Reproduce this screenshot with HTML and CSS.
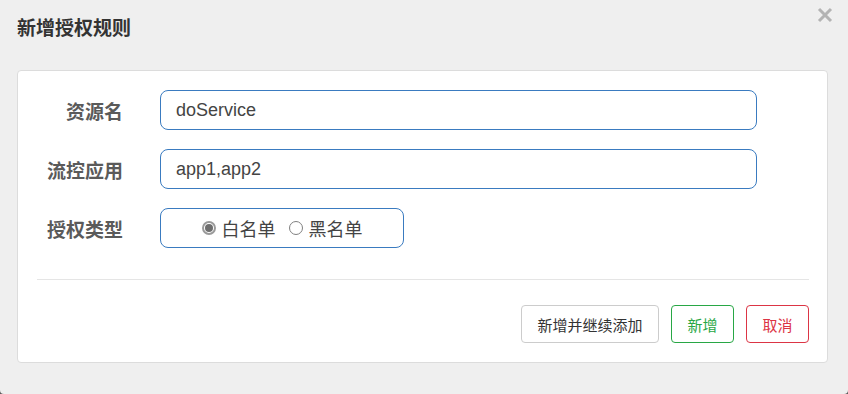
FILE: index.html
```html
<!DOCTYPE html>
<html lang="zh">
<head>
<meta charset="utf-8">
<link rel="stylesheet" href="styles.css">
</head>
<body>
<div class="modal">
  <div class="modal-header">
    <h3 class="title">新增授权规则</h3>
    <button class="close" type="button" aria-label="close">
      <svg width="16" height="16" viewBox="0 0 16 16"><path d="M2 2 L14 14 M14 2 L2 14" stroke="#b3b3b3" stroke-width="3" stroke-linecap="butt"/></svg>
    </button>
  </div>
  <div class="card">
    <form class="form">
      <div class="row">
        <label class="label">资源名</label>
        <input class="input" type="text" value="doService">
      </div>
      <div class="row">
        <label class="label">流控应用</label>
        <input class="input" type="text" value="app1,app2">
      </div>
      <div class="row">
        <label class="label">授权类型</label>
        <div class="radio-box">
          <span class="radio checked"></span><span class="radio-text">白名单</span>
          <span class="radio second"></span><span class="radio-text">黑名单</span>
        </div>
      </div>
    </form>
    <div class="sep"></div>
    <div class="actions">
      <button class="btn btn-default" type="button">新增并继续添加</button>
      <button class="btn btn-success" type="button">新增</button>
      <button class="btn btn-danger" type="button">取消</button>
    </div>
  </div>
</div>
</body>
</html>
```
FILE: styles.css
```css
html {
  background: #5a5a5a;
}
body {
  margin: 0;
  font-family: "Liberation Sans", "Noto Sans CJK SC", sans-serif;
}
.modal {
  width: 848px;
  height: 394px;
  background: #efefef;
  border-radius: 0 0 4px 4px;
  box-sizing: border-box;
  padding: 0 20px 0 17px;
}
.modal-header {
  height: 70px;
  display: flex;
  align-items: flex-start;
  justify-content: space-between;
}
.title {
  margin: 17px 0 0 0;
  font-size: 19px;
  line-height: 24px;
  font-weight: bold;
  color: #333;
}
.close {
  margin: 7px -5px 0 0;
  padding: 0;
  border: 0;
  background: transparent;
  width: 16px;
  height: 16px;
  display: block;
}
.close svg {
  display: block;
}
.card {
  background: #fff;
  border: 1px solid #dcdcdc;
  border-radius: 4px;
  padding: 19px 18px 19px 18px;
}
.form {
  display: flex;
  flex-direction: column;
  gap: 19px;
}
.row {
  display: grid;
  grid-template-columns: 87px auto;
  column-gap: 37px;
  align-items: center;
}
.label {
  text-align: right;
  font-size: 19px;
  font-weight: bold;
  color: #5a5a5a;
}
.input {
  width: 597px;
  height: 40px;
  box-sizing: border-box;
  border: 1px solid #3a7bc0;
  border-radius: 8px;
  padding: 0 15px;
  font-family: "Liberation Sans", "Noto Sans CJK SC", sans-serif;
  font-size: 18px;
  color: #444;
  outline: none;
}
.radio-box {
  width: 244px;
  height: 40px;
  box-sizing: border-box;
  border: 1px solid #3a7bc0;
  border-radius: 8px;
  display: flex;
  align-items: center;
  justify-content: center;
}
.radio {
  width: 14px;
  height: 14px;
  box-sizing: border-box;
  border: 1px solid #808080;
  border-radius: 50%;
  background: #fff;
  position: relative;
}
.radio.checked {
  border: 2px solid #9a9a9a;
}
.radio.checked::after {
  content: "";
  position: absolute;
  left: 1px;
  top: 1px;
  width: 8px;
  height: 8px;
  border-radius: 50%;
  background: #6e6e6e;
}
.radio.second {
  margin-left: 13px;
}
.radio-text {
  margin-left: 6px;
  font-size: 18px;
  color: #444;
}
.sep {
  height: 1px;
  background: #e5e5e5;
  margin: 31px 0 0 1px;
}
.actions {
  display: flex;
  justify-content: flex-end;
  gap: 12px;
  margin-top: 25px;
}
.btn {
  height: 38px;
  box-sizing: border-box;
  padding: 0 15.5px;
  border-radius: 4px;
  background: #fff;
  font-family: "Liberation Sans", "Noto Sans CJK SC", sans-serif;
  font-size: 15px;
}
.btn-default {
  border: 1px solid #ccc;
  color: #333;
}
.btn-success {
  border: 1px solid #28a745;
  color: #28a745;
}
.btn-danger {
  border: 1px solid #dc3545;
  color: #dc3545;
}
```
